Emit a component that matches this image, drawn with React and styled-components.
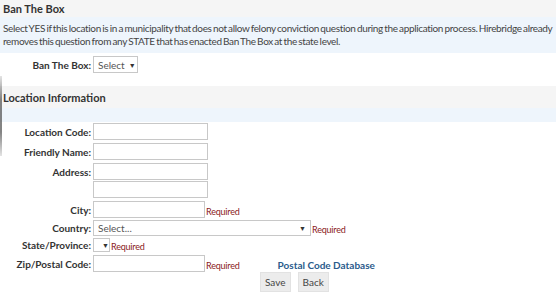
import React from "react";
import styled, { createGlobalStyle } from "styled-components";

const GlobalStyle = createGlobalStyle`
  html, body {
    margin: 0;
    padding: 0;
    background: #ffffff;
  }
  body {
    font-family: Lato, "Liberation Sans", Arial, sans-serif;
    color: #333333;
  }
`;

const Page = styled.div`
  position: relative;
  width: 556px;
  height: 298px;
  overflow: hidden;
`;

const EdgeShadow = styled.div`
  position: absolute;
  left: 0;
  top: 76px;
  width: 2px;
  height: 80px;
  background: linear-gradient(to bottom, rgba(120, 120, 120, 0.2), rgba(90, 90, 90, 0.75) 30%, rgba(90, 90, 90, 0.75) 70%, rgba(120, 120, 120, 0.2));
`;

const SectionTitle = styled.div`
  background: #f5f5f5;
  height: ${(p) => p.$h}px;
  margin-top: ${(p) => p.$mt || 0}px;
  padding-left: 3px;
  display: flex;
  align-items: center;
  font-size: 11px;
  font-weight: 700;
  color: #333333;
`;

const Notice = styled.div`
  background: #eef5fc;
  min-height: ${(p) => p.$h || 0}px;
  padding: ${(p) => (p.$h ? "0 3px" : "5px 3px 5px")};
  font-size: 10px;
  line-height: 13px;
  letter-spacing: -0.35px;
  word-spacing: -0.8px;
  color: #444444;
`;

const Form = styled.div`
  display: flex;
  flex-direction: column;
`;

const Row = styled.div`
  display: grid;
  grid-template-columns: 91px 1fr;
  column-gap: 2px;
  align-items: center;
  margin-top: ${(p) => p.$mt || 0}px;
`;

const Label = styled.div`
  text-align: right;
  font-size: 10px;
  font-weight: 700;
  color: #333333;
  white-space: nowrap;
`;

const Control = styled.div`
  display: flex;
  align-items: center;
  padding-left: ${(p) => p.$pl || 0}px;
`;

const Input = styled.input`
  box-sizing: border-box;
  width: ${(p) => p.$w}px;
  height: 17px;
  margin: 0;
  padding: 0 3px;
  border: 1px solid #c8c8c8;
  background: #ffffff;
  font-family: inherit;
  font-size: 10px;
  outline: none;
`;

const Select = styled.div`
  box-sizing: border-box;
  width: ${(p) => p.$w}px;
  height: ${(p) => p.$h || 17}px;
  border: 1px solid #c8c8c8;
  background: #ffffff;
  display: flex;
  align-items: center;
  justify-content: space-between;
  padding: 0 4px;
  font-size: 10px;
  color: #555555;
`;

const Arrow = styled.span`
  font-size: 7px;
  color: #333333;
  margin-left: 4px;
`;

const Required = styled.span`
  font-size: 9px;
  line-height: 11px;
  letter-spacing: -0.2px;
  color: #8b1a1a;
  margin-left: 1px;
  padding-top: 3px;
`;

const DbLink = styled.a`
  margin-left: 38px;
  font-size: 10px;
  font-weight: 700;
  color: #2b5b8c;
  text-decoration: none;
  padding-top: 2px;
`;

const Button = styled.button`
  box-sizing: border-box;
  height: 20px;
  margin: 0 7px 0 0;
  padding: 0 4px;
  border: 1px solid #e2e2e2;
  background: #ececec;
  font-family: inherit;
  font-size: 10px;
  color: #444444;
`;

export default function App() {
  return (
    <Page>
      <GlobalStyle />
      <EdgeShadow />

      <SectionTitle $h={17}>Ban The Box</SectionTitle>
      <Notice>
        Select YES if this location is in a municipality that does not allow felony conviction question during the
        application process. Hirebridge already removes this question from any STATE that has enacted Ban The Box at
        the state level.
      </Notice>

      <Row $mt={3}>
        <Label>Ban The Box:</Label>
        <Control>
          <Select $w={45}>
            Select<Arrow>▼</Arrow>
          </Select>
        </Control>
      </Row>

      <SectionTitle $h={22} $mt={13}>Location Information</SectionTitle>
      <Notice $h={14} />

      <Form>
        <Row $mt={1}>
          <Label>Location Code:</Label>
          <Control>
            <Input $w={115} />
          </Control>
        </Row>
        <Row $mt={3}>
          <Label>Friendly Name:</Label>
          <Control>
            <Input $w={115} />
          </Control>
        </Row>
        <Row $mt={3}>
          <Label>Address:</Label>
          <Control>
            <Input $w={115} />
          </Control>
        </Row>
        <Row $mt={1}>
          <Label />
          <Control>
            <Input $w={115} />
          </Control>
        </Row>
        <Row $mt={3}>
          <Label>City:</Label>
          <Control>
            <Input $w={112} />
            <Required>Required</Required>
          </Control>
        </Row>
        <Row $mt={2}>
          <Label>Country:</Label>
          <Control>
            <Select $w={218} $h={16}>
              Select...<Arrow>▼</Arrow>
            </Select>
            <Required>Required</Required>
          </Control>
        </Row>
        <Row $mt={2}>
          <Label>State/Province:</Label>
          <Control>
            <Select $w={17} $h={14}>
              <Arrow>▼</Arrow>
            </Select>
            <Required>Required</Required>
          </Control>
        </Row>
        <Row $mt={3}>
          <Label>Zip/Postal Code:</Label>
          <Control>
            <Input $w={112} />
            <Required>Required</Required>
            <DbLink>Postal Code Database</DbLink>
          </Control>
        </Row>
        <Row>
          <Label />
          <Control $pl={167}>
            <Button>Save</Button>
            <Button>Back</Button>
          </Control>
        </Row>
      </Form>
    </Page>
  );
}
